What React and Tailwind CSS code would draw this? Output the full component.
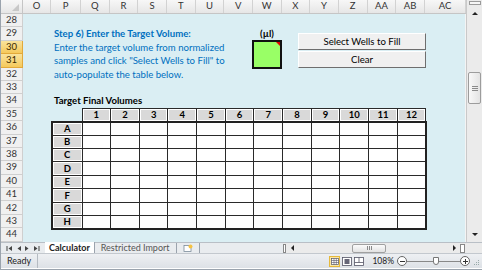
const cols = [
  { label: "O", w: "w-[28px]" },
  { label: "P", w: "w-[30px]" },
  { label: "Q", w: "w-[28.67px]" },
  { label: "R", w: "w-[28.67px]" },
  { label: "S", w: "w-[28.67px]" },
  { label: "T", w: "w-[28.67px]" },
  { label: "U", w: "w-[28.67px]" },
  { label: "V", w: "w-[28.67px]" },
  { label: "W", w: "w-[28.67px]" },
  { label: "X", w: "w-[28.67px]" },
  { label: "Y", w: "w-[28.67px]" },
  { label: "Z", w: "w-[28.67px]" },
  { label: "AA", w: "w-[28.67px]" },
  { label: "AB", w: "w-[28.67px]" },
  { label: "AC", w: "flex-1" },
];

const rowNums = [28, 29, 30, 31, 32, 33, 34, 35, 36, 37, 38, 39, 40, 41, 42, 43, 44];
const wellRows = ["A", "B", "C", "D", "E", "F", "G", "H"];
const wellCols = [1, 2, 3, 4, 5, 6, 7, 8, 9, 10, 11, 12];

function ColumnHeader() {
  return (
    <div className="flex h-[14px] bg-gradient-to-b from-[#f7f7f7] to-[#e6e6e6] border-b border-[#c5c5c5]">
      <div className="w-[22px] border-r border-[#c5c5c5] relative">
        <div className="absolute right-[3px] bottom-[2px] w-0 h-0 border-l-[7px] border-l-transparent border-b-[7px] border-b-[#c8c8c8]" />
      </div>
      {cols.map((c) => (
        <div
          key={c.label}
          className={`${c.w} border-r border-[#d2d2d2] flex items-center justify-center text-[9.5px] text-[#333]`}
        >
          {c.label}
        </div>
      ))}
    </div>
  );
}

function RowHeaders() {
  return (
    <div className="w-[22px] flex flex-col">
      {rowNums.map((n) => {
        const sel = n === 30 || n === 31;
        return (
          <div
            key={n}
            className={`h-[13.4px] flex items-center justify-center text-[9.5px] border-b border-r ${
              sel
                ? "bg-gradient-to-b from-[#f9e39c] to-[#f5c95a] border-[#e2a93a] text-[#3b2a00]"
                : "bg-[#f0f0f0] border-[#cfcfcf] text-[#333]"
            }`}
          >
            {n}
          </div>
        );
      })}
    </div>
  );
}

function WellTable() {
  return (
    <table className="ml-[28px] w-[374px] self-start border-collapse table-fixed text-[9.5px] font-bold text-black">
      <thead>
        <tr className="h-[13.4px]">
          <th className="w-[30px] p-0" />
          {wellCols.map((c) => (
            <th
              key={c}
              className="w-[28.67px] p-0 bg-[#d9d9d9] border border-[#2a2a2a] shadow-[inset_0_0_0_1px_#fff] leading-none"
            >
              {c}
            </th>
          ))}
        </tr>
      </thead>
      <tbody className="border-2 border-[#222]">
        {wellRows.map((r) => (
          <tr key={r} className="h-[13.4px]">
            <td className="p-0 text-center bg-[#d9d9d9] border border-[#2a2a2a] shadow-[inset_0_0_0_1px_#fff] leading-none">
              {r}
            </td>
            {wellCols.map((c) => (
              <td key={c} className="p-0 bg-white border border-[#2a2a2a]" />
            ))}
          </tr>
        ))}
      </tbody>
    </table>
  );
}

function SheetContent() {
  return (
    <div className="flex-1 bg-[#daeef3] flex flex-col border-r border-[#f4f4f4]">
      <div className="h-[13.4px]" />
      <div className="h-[53.6px] flex">
        <div className="ml-[31px] w-[198px] text-[#0070c0] text-[9.6px] leading-[13.4px]">
          <div className="font-bold">Step 6) Enter the Target Volume:</div>
          <div>Enter the target volume from normalized</div>
          <div>samples and click "Select Wells to Fill" to</div>
          <div>auto-populate the table below.</div>
        </div>
        <div className="w-[30px] flex flex-col items-center">
          <div className="h-[13px] flex items-center text-[9.5px] font-bold text-black">(µl)</div>
          <div className="w-[30px] h-[29px] bg-[#99ff66] border-2 border-[#111] relative">
            <div className="absolute top-0 right-0 w-0 h-0 border-l-[4px] border-l-transparent border-t-[4px] border-t-[#e00000]" />
          </div>
        </div>
        <div className="ml-[16px] w-[128px] pt-[5.6px] flex flex-col gap-[1px]">
          <button className="h-[17px] bg-[#f0f0f0] border border-t-white border-l-white border-b-[#6e6e6e] border-r-[#6e6e6e] text-[9.6px] text-black leading-none">
            Select Wells to Fill
          </button>
          <button className="h-[17px] bg-[#f0f0f0] border border-t-white border-l-white border-b-[#6e6e6e] border-r-[#6e6e6e] text-[9.6px] text-black leading-none">
            Clear
          </button>
        </div>
      </div>
      <div className="h-[13.4px]" />
      <div className="h-[13.4px] ml-[31px] flex items-center text-[9.6px] font-bold text-black">
        Target Final Volumes
      </div>
      <WellTable />
    </div>
  );
}

function VScroll() {
  return (
    <div className="w-[16px] bg-[#ebebeb] border-l border-[#c9c9c9] flex flex-col items-center">
      <div className="w-[12px] h-[4px] mt-[1px] bg-[#f6f6f6] border border-[#9a9a9a]" />
      <div className="h-[10px] flex items-center justify-center mt-[3px]">
        <div className="w-0 h-0 border-l-[3px] border-r-[3px] border-l-transparent border-r-transparent border-b-[3px] border-b-[#222]" />
      </div>
      <div className="mt-[54px] w-[13px] h-[32px] rounded-[2px] bg-gradient-to-r from-[#f8f8f8] to-[#e3e3e3] border border-[#9c9c9c] flex flex-col items-center justify-center gap-[1px]">
        <div className="w-[6px] h-px bg-[#8a8a8a]" />
        <div className="w-[6px] h-px bg-[#8a8a8a]" />
        <div className="w-[6px] h-px bg-[#8a8a8a]" />
      </div>
      <div className="flex-1" />
      <div className="h-[10px] flex items-center justify-center mb-[3px]">
        <div className="w-0 h-0 border-l-[3px] border-r-[3px] border-l-transparent border-r-transparent border-t-[3px] border-t-[#222]" />
      </div>
    </div>
  );
}

function NavArrow({ dir, bar }) {
  return (
    <svg width="7" height="7" viewBox="0 0 7 7">
      {dir === "left" ? (
        <>
          {bar && <rect x="0.5" y="1" width="1" height="5" fill="#444" />}
          <path d="M6 1 L2.5 3.5 L6 6 Z" fill="#444" />
        </>
      ) : (
        <>
          <path d="M1 1 L4.5 3.5 L1 6 Z" fill="#444" />
          {bar && <rect x="5.5" y="1" width="1" height="5" fill="#444" />}
        </>
      )}
    </svg>
  );
}

function TabBar() {
  return (
    <div className="h-[11px] flex items-stretch bg-[#e9ecef] border-t border-[#b9bfc6] text-[9px]">
      <div className="w-[44px] flex items-center gap-[2px] pl-[5px]">
        <NavArrow dir="left" bar />
        <NavArrow dir="left" />
        <NavArrow dir="right" />
        <NavArrow dir="right" bar />
      </div>
      <div className="bg-white px-[4px] -mt-px flex items-center font-bold text-[#222] border-r border-[#9aa3ad]">
        Calculator
      </div>
      <div className="px-[6px] flex items-center text-[#555] border-r border-[#9aa3ad]">
        Restricted Import
      </div>
      <div className="px-[6px] flex items-center border-r border-[#9aa3ad]">
        <svg width="10" height="8" viewBox="0 0 10 8">
          <rect x="1" y="1.5" width="7" height="6" fill="#fff" stroke="#7b8a99" strokeWidth="0.8" />
          <circle cx="7.5" cy="2.5" r="2" fill="#f5c242" />
        </svg>
      </div>
      <div className="flex-1" />
      <div className="w-[199px] flex items-center bg-[#ebebeb]">
        <div className="w-[3px] h-[9px] border border-[#888] bg-white mr-[5px]" />
        <div className="w-0 h-0 border-t-[3px] border-b-[3px] border-t-transparent border-b-transparent border-r-[3px] border-r-[#222]" />
        <div className="ml-[58px] w-[34px] h-[9px] rounded-[2px] bg-gradient-to-b from-[#fbfbfb] to-[#e2e2e2] border border-[#a0a0a0] flex items-center justify-center gap-[1px]">
          <div className="w-px h-[4px] bg-[#8a8a8a]" />
          <div className="w-px h-[4px] bg-[#8a8a8a]" />
          <div className="w-px h-[4px] bg-[#8a8a8a]" />
        </div>
        <div className="flex-1" />
        <div className="w-0 h-0 border-t-[3px] border-b-[3px] border-t-transparent border-b-transparent border-l-[3px] border-l-[#222]" />
        <div className="w-[5px] h-[9px] ml-[4px] mr-[17px] border border-[#888] bg-white" />
      </div>
    </div>
  );
}

function StatusBar() {
  return (
    <div className="h-[15px] flex items-center bg-gradient-to-b from-[#eef0f3] to-[#dde1e6] border-t border-[#c3c8ce] text-[9px] text-[#222]">
      <div className="h-full px-[6px] flex items-center border-r border-[#b5bbc2]">Ready</div>
      <div className="flex-1" />
      <div className="flex items-center gap-[2px]">
        <div className="w-[11px] h-[11px] bg-[#fbe7a6] border border-[#e6b93c] flex items-center justify-center">
          <svg width="8" height="7" viewBox="0 0 8 7">
            <rect x="0.5" y="0.5" width="7" height="6" fill="#fff" stroke="#556" strokeWidth="0.7" />
            <path d="M3 0.5 V6.5 M5.3 0.5 V6.5 M0.5 2.5 H7.5 M0.5 4.5 H7.5" stroke="#556" strokeWidth="0.6" />
          </svg>
        </div>
        <svg width="10" height="9" viewBox="0 0 10 9">
          <rect x="0.5" y="0.5" width="9" height="8" fill="#fff" stroke="#556" strokeWidth="0.8" />
          <rect x="2.5" y="2" width="5" height="5" fill="#667" />
        </svg>
        <svg width="10" height="9" viewBox="0 0 10 9">
          <rect x="0.5" y="0.5" width="9" height="8" fill="#fff" stroke="#556" strokeWidth="0.8" />
          <path d="M0.5 5.5 H9.5 M5 0.5 V5.5" stroke="#556" strokeWidth="0.8" />
        </svg>
      </div>
      <div className="ml-[8px] text-[8.5px]">108%</div>
      <div className="ml-[3px] w-[10px] h-[10px] rounded-full border border-[#666] bg-white flex items-center justify-center">
        <div className="w-[5px] h-px bg-[#333]" />
      </div>
      <div className="w-[53px] h-px bg-[#888] relative">
        <div className="absolute left-[26px] -top-[4px] w-[6px] h-[8px] bg-white border border-[#777] rounded-b-[3px]" />
      </div>
      <div className="w-[10px] h-[10px] rounded-full border border-[#666] bg-white flex items-center justify-center relative">
        <div className="w-[5px] h-px bg-[#333]" />
        <div className="absolute w-px h-[5px] bg-[#333]" />
      </div>
      <div className="w-[12px] h-full flex items-end justify-end pr-[2px] pb-[2px]">
        <svg width="7" height="7" viewBox="0 0 7 7">
          <g fill="#9aa">
            <rect x="5" y="1" width="1" height="1" />
            <rect x="3" y="3" width="1" height="1" />
            <rect x="5" y="3" width="1" height="1" />
            <rect x="1" y="5" width="1" height="1" />
            <rect x="3" y="5" width="1" height="1" />
            <rect x="5" y="5" width="1" height="1" />
          </g>
        </svg>
      </div>
    </div>
  );
}

export default function App() {
  return (
    <div className="w-[482px] h-[270px] flex flex-col bg-white overflow-hidden font-[Lato,'Noto_Sans',sans-serif] border-l border-b border-[#9aa3ad]">
      <div className="h-[242px] flex">
        <div className="flex-1 flex flex-col overflow-hidden">
          <ColumnHeader />
          <div className="flex-1 flex">
            <RowHeaders />
            <SheetContent />
          </div>
        </div>
        <VScroll />
      </div>
      <TabBar />
      <StatusBar />
    </div>
  );
}
